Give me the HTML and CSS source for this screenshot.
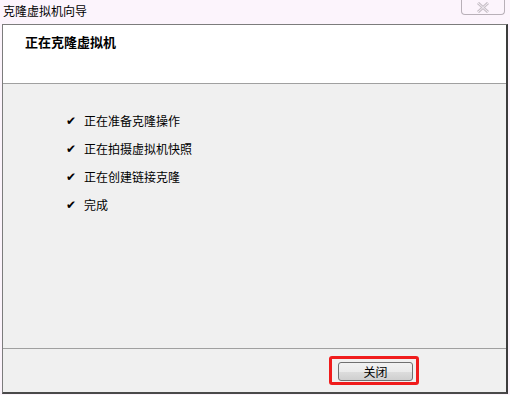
FILE: index.html
```html
<!DOCTYPE html>
<html>
<head>
    <meta charset="utf-8">
    <title>克隆虚拟机向导</title>
    <link rel="stylesheet" href="styles.css">
</head>
<body>
    <div class="titlebar">
        <span class="title">克隆虚拟机向导</span>
        <span class="close">
            <svg width="14" height="11" viewBox="0 0 14 11">
                <path d="M2 1 L12 10 M12 1 L2 10" stroke="#c8c0c8" stroke-width="3" fill="none"/>
                <path d="M2 1 L12 10 M12 1 L2 10" stroke="#f4eef4" stroke-width="1" fill="none"/>
            </svg>
        </span>
    </div>
    <div class="window">
        <div class="header">
            <span>正在克隆虚拟机</span>
        </div>
        <div class="content">
            <ul class="steps">
                <li><span class="tick">✔</span>正在准备克隆操作</li>
                <li><span class="tick">✔</span>正在拍摄虚拟机快照</li>
                <li><span class="tick">✔</span>正在创建链接克隆</li>
                <li><span class="tick">✔</span>完成</li>
            </ul>
        </div>
        <div class="footer">
            <div class="highlight">
                <button class="btn">关闭</button>
            </div>
        </div>
    </div>
</body>
</html>
```

FILE: styles.css
```css
html,
body {
    margin: 0;
    padding: 0;
    height: 100%;
    background: #fcf4fc;
    font-family: "Noto Sans CJK SC", "Liberation Sans", sans-serif;
    font-size: 12px;
    color: #000;
}

.titlebar {
    height: 24px;
    display: flex;
    justify-content: space-between;
    align-items: flex-start;
}

.title {
    padding: 3px 0 0 3px;
    line-height: 15px;
}

.close {
    width: 42px;
    height: 14px;
    margin-right: 5px;
    border: 1px solid #b8b0b8;
    border-top: none;
    border-radius: 0 0 4px 4px;
    display: flex;
    justify-content: center;
    align-items: center;
}

.window {
    margin-left: 2px;
    width: 503px;
    height: 367px;
    border-left: 1px solid #7c7c7c;
    border-top: 1px solid #7c7c7c;
    border-right: 2px solid #3c3c3c;
    border-bottom: 2px solid #4a4a4a;
    display: flex;
    flex-direction: column;
    background: #f0f0f0;
}

.header {
    background: #fff;
    border-bottom: 1px solid #a0a0a0;
    padding-left: 22px;
    box-sizing: border-box;
    height: 59px;
}

.header span {
    display: block;
    padding-top: 9px;
    font-size: 13px;
    font-weight: bold;
    line-height: 16px;
}

.content {
    height: 265px;
    border-bottom: 1px solid #a0a0a0;
    box-sizing: border-box;
}

.steps {
    list-style: none;
    margin: 0;
    padding: 28px 0 0 63px;
}

.steps li {
    height: 28px;
    line-height: 18px;
    display: flex;
}

.tick {
    width: 18px;
    font-family: "DejaVu Sans", sans-serif;
    font-size: 12px;
}

.footer {
    flex: 1;
    display: flex;
    align-items: flex-start;
    padding: 7px 0 0 326px;
}

.highlight {
    border: 3px solid #f01c1c;
    border-radius: 3px;
    padding: 3px 3px 1px 6px;
}

.btn {
    width: 75px;
    height: 19px;
    padding: 0;
    border: 1px solid #707070;
    border-radius: 3px;
    background: linear-gradient(#f2f2f2 0%, #ebebeb 50%, #dddddd 51%, #cfcfcf 100%);
    font-family: "Noto Sans CJK SC", sans-serif;
    font-size: 12px;
    line-height: 16px;
    color: #000;
}
```
